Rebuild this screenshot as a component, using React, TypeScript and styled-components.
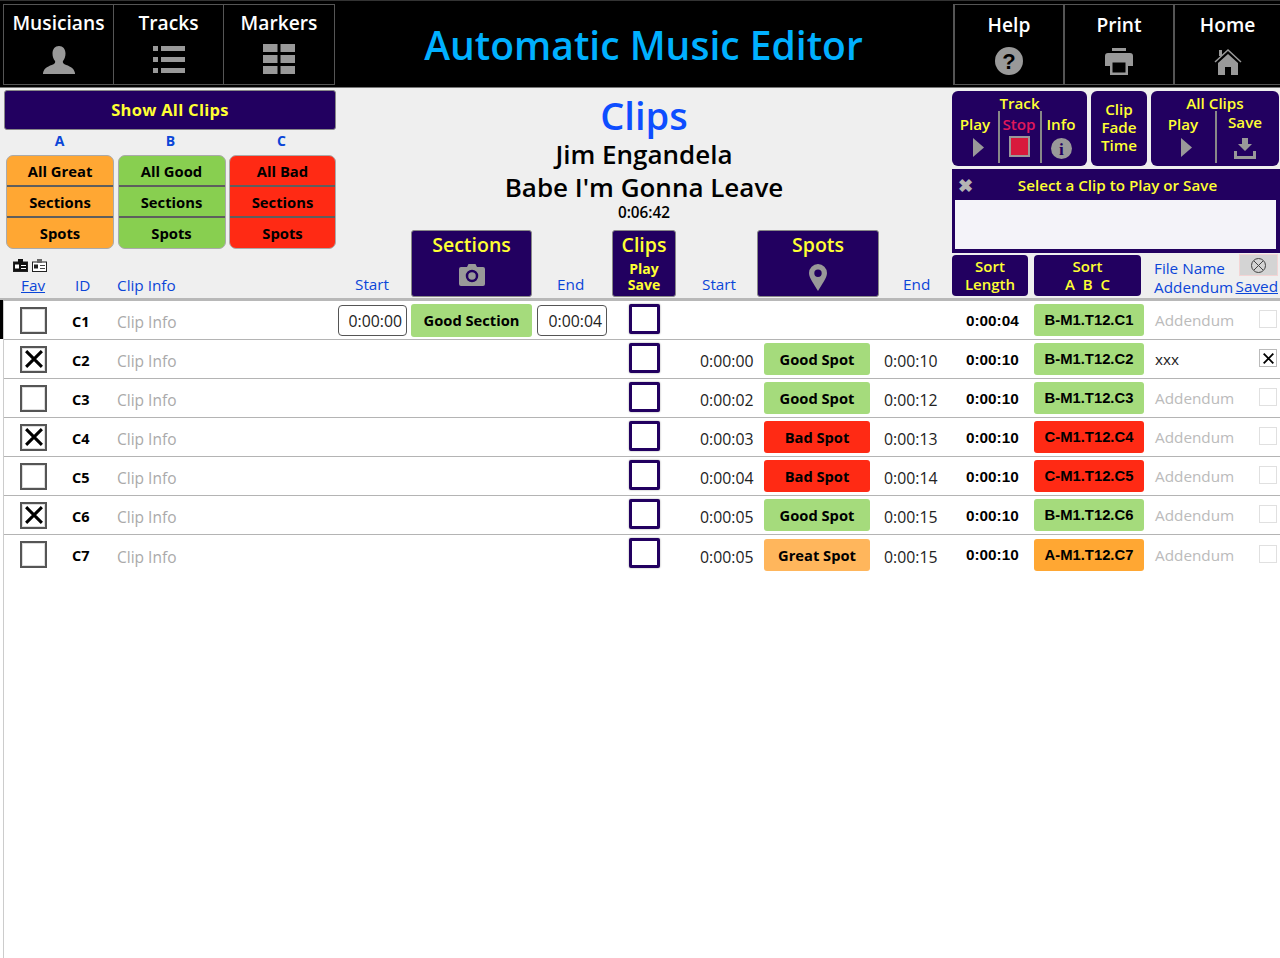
import React from 'react';
import styled, {createGlobalStyle} from "styled-components";

const NAVY = "#220060";
const YELLOW = "#ffff33";
const ICON = "#999999";
const LINK = "#0b46d8";
const ORANGE = "#ffa733";
const GREEN = "#88cf50";
const RED = "#ff2a14";
const SOFT_GREEN = "#a5db7c";
const SANS = `"Open Sans", "Noto Sans", sans-serif`;

const GlobalStyle = createGlobalStyle`
    html, body {
        margin: 0;
        padding: 0;
        background: #ffffff;
        font-family: ${SANS};
    }
    * {
        box-sizing: border-box;
    }
`

type Clip = {
    id: string
    fav: boolean
    start?: string
    label?: string
    end?: string
    kind?: "good" | "bad" | "great"
    length: string
    file: string
    addendum?: string
}

const clips: Clip[] = [
    {id: "C1", fav: false, length: "0:00:04", file: "B-M1.T12.C1"},
    {id: "C2", fav: true, start: "0:00:00", label: "Good Spot", end: "0:00:10", kind: "good", length: "0:00:10", file: "B-M1.T12.C2", addendum: "xxx"},
    {id: "C3", fav: false, start: "0:00:02", label: "Good Spot", end: "0:00:12", kind: "good", length: "0:00:10", file: "B-M1.T12.C3"},
    {id: "C4", fav: true, start: "0:00:03", label: "Bad Spot", end: "0:00:13", kind: "bad", length: "0:00:10", file: "C-M1.T12.C4"},
    {id: "C5", fav: false, start: "0:00:04", label: "Bad Spot", end: "0:00:14", kind: "bad", length: "0:00:10", file: "C-M1.T12.C5"},
    {id: "C6", fav: true, start: "0:00:05", label: "Good Spot", end: "0:00:15", kind: "good", length: "0:00:10", file: "B-M1.T12.C6"},
    {id: "C7", fav: false, start: "0:00:05", label: "Great Spot", end: "0:00:15", kind: "great", length: "0:00:10", file: "A-M1.T12.C7"},
];

const kindColor = {good: SOFT_GREEN, bad: RED, great: "#ffb65c"};
const fileColor = {good: SOFT_GREEN, bad: RED, great: ORANGE};

const PersonIcon = () => (
    <svg width="32" height="28" viewBox="0 0 32 28"><path fill={ICON} d="M16 0c4 0 6.500 3 6.500 7.500 0 3-1 5.500-2.500 7.500-.5 1 0 2.500 1.500 3.200C26 20 31 21.500 32 27v1H0v-1c1-5.500 6-7 10.500-8.800C12 17.500 12.500 16 12 15c-1.500-2-2.500-4.500-2.500-7.500C9.500 3 12 0 16 0z"/></svg>
);
const ListIcon = () => (
    <svg width="32" height="28" viewBox="0 0 32 28" fill={ICON}>
        <rect x="0" y="0" width="5" height="5"/><rect x="8" y="0" width="24" height="5"/>
        <rect x="0" y="11" width="5" height="5"/><rect x="8" y="11" width="24" height="5"/>
        <rect x="0" y="22" width="5" height="5"/><rect x="8" y="22" width="24" height="5"/>
    </svg>
);
const GridIcon = () => (
    <svg width="32" height="30" viewBox="0 0 32 30" fill={ICON}>
        <rect x="0" y="0" width="14.500" height="8"/><rect x="17.500" y="0" width="14.500" height="8"/>
        <rect x="0" y="11" width="14.500" height="8"/><rect x="17.500" y="11" width="14.500" height="8"/>
        <rect x="0" y="22" width="14.500" height="8"/><rect x="17.500" y="22" width="14.500" height="8"/>
    </svg>
);
const HelpIcon = () => (
    <svg width="28" height="28" viewBox="0 0 28 28">
        <circle cx="14" cy="14" r="14" fill={ICON}/>
        <text x="14" y="22" textAnchor="middle" fontFamily="Liberation Sans" fontWeight="700" fontSize="22" fill="#000">?</text>
    </svg>
);
const PrintIcon = () => (
    <svg width="28" height="27" viewBox="0 0 28 27" fill={ICON}>
        <rect x="7" y="0" width="14" height="3"/>
        <path d="M3 5h22a3 3 0 0 1 3 3v10h-5v-6H5v6H0V8a3 3 0 0 1 3-3z"/>
        <path d="M5 12h18v15H5zM7.500 14.500v10h13v-10z" fillRule="evenodd"/>
    </svg>
);
const HomeIcon = () => (
    <svg width="28" height="27" viewBox="0 0 28 27">
        <path fill="none" stroke={ICON} strokeWidth="1.500" d="M1 14 14 2l13 12"/>
        <rect x="5" y="2" width="3" height="6" fill={ICON}/>
        <path fill={ICON} d="M14 6 24 15v12h-7v-8h-6v8H4V15z"/>
    </svg>
);
const Triangle = () => (
    <TriangleShape width="11" height="19" viewBox="0 0 11 19"><path fill={ICON} d="M0 0l11 9.500L0 19z"/></TriangleShape>
);
const InfoIcon = () => (
    <svg width="21" height="21" viewBox="0 0 22 22">
        <circle cx="11" cy="11" r="11" fill={ICON}/>
        <text x="11" y="18" textAnchor="middle" fontFamily="Liberation Serif" fontWeight="700" fontSize="18" fill={NAVY}>i</text>
    </svg>
);
const SaveIcon = () => (
    <svg width="22" height="21" viewBox="0 0 22 21" fill={ICON}>
        <path d="M8 0h6v6h4l-7 7-7-7h4z"/>
        <path d="M0 13h3v5h16v-5h3v8H0z"/>
    </svg>
);
const CameraIcon = () => (
    <svg width="26" height="22" viewBox="0 0 26 22">
        <path fill={ICON} d="M2 3h6l1.500-3h7L18 3h6a2 2 0 0 1 2 2v15a2 2 0 0 1-2 2H2a2 2 0 0 1-2-2V5a2 2 0 0 1 2-2z"/>
        <circle cx="13" cy="12" r="5" fill="none" stroke={NAVY} strokeWidth="2.500"/>
    </svg>
);
const PinIcon = () => (
    <svg width="18" height="27" viewBox="0 0 18 27">
        <path fill={ICON} fillRule="evenodd" d="M9 0a9 9 0 0 1 9 9c0 5-5 11-9 18C5 20 0 14 0 9a9 9 0 0 1 9-9zm0 5.500a3.700 3.700 0 1 0 0 7.400 3.700 3.700 0 0 0 0-7.400z"/>
    </svg>
);
const CrossMark = ({size}: {size: number}) => (
    <svg width={size} height={size} viewBox="0 0 16 16"><path stroke="#000" strokeWidth="2.700" d="M1 1l14 14M15 1 1 15"/></svg>
);
const CardIcon = ({dark}: {dark: boolean}) => (
    <svg width="15" height="13" viewBox="0 0 15 13">
        <rect x="0.500" y="3" width="14" height="9.500" fill={dark ? "#111" : "#fff"} stroke="#222"/>
        <rect x="5" y="0" width="5" height="4" fill={dark ? "#111" : "#666"}/>
        <rect x="2" y="5.500" width="4" height="4" fill={dark ? "#fff" : "#222"}/>
        <rect x="8" y="6" width="5" height="1" fill={dark ? "#fff" : "#444"}/>
        <rect x="8" y="9" width="5" height="1" fill={dark ? "#fff" : "#444"}/>
    </svg>
);

const App = () => {
    return (
        <>
            <GlobalStyle/>
            <Header>
                <NavGroup>
                    <NavCell $width={111}><NavLabel>Musicians</NavLabel><NavIcon><PersonIcon/></NavIcon></NavCell>
                    <NavCell $width={111}><NavLabel>Tracks</NavLabel><NavIcon><ListIcon/></NavIcon></NavCell>
                    <NavCell $width={112}><NavLabel>Markers</NavLabel><NavIcon><GridIcon/></NavIcon></NavCell>
                </NavGroup>
                <AppTitle>Automatic Music Editor</AppTitle>
                <NavGroup>
                    <NavCell $width={111} $low><NavLabel>Help</NavLabel><NavIcon $low><HelpIcon/></NavIcon></NavCell>
                    <NavCell $width={111} $low><NavLabel>Print</NavLabel><NavIcon $low><PrintIcon/></NavIcon></NavCell>
                    <NavCell $width={108} $low><NavLabel>Home</NavLabel><NavIcon $low><HomeIcon/></NavIcon></NavCell>
                </NavGroup>
            </Header>

            <Main>
                <Panel>
                    <LeftColumn>
                        <ShowAll>Show All Clips</ShowAll>
                        <GroupLetters><span>A</span><span>B</span><span>C</span></GroupLetters>
                        <GroupCards>
                            <GroupCard $color={ORANGE}><GroupItem>All Great</GroupItem><GroupItem>Sections</GroupItem><GroupItem>Spots</GroupItem></GroupCard>
                            <GroupCard $color={GREEN}><GroupItem>All Good</GroupItem><GroupItem>Sections</GroupItem><GroupItem>Spots</GroupItem></GroupCard>
                            <GroupCard $color={RED}><GroupItem>All Bad</GroupItem><GroupItem>Sections</GroupItem><GroupItem>Spots</GroupItem></GroupCard>
                        </GroupCards>
                        <CardIcons><CardIcon dark/><CardIcon dark={false}/></CardIcons>
                        <ColumnHeads>
                            <FavLink>Fav</FavLink>
                            <HeadLabel>ID</HeadLabel>
                            <HeadLabel>Clip Info</HeadLabel>
                        </ColumnHeads>
                    </LeftColumn>

                    <CenterColumn>
                        <ClipsTitle>Clips</ClipsTitle>
                        <SongLine>Jim Engandela</SongLine>
                        <SongLine>Babe I'm Gonna Leave</SongLine>
                        <Duration>0:06:42</Duration>
                        <ToolRow>
                            <ToolLabel $left={19}>Start</ToolLabel>
                            <ToolButton><ToolTitle>Sections</ToolTitle><CameraIcon/></ToolButton>
                            <ToolLabel $left={25}>End</ToolLabel>
                            <ToolButton>
                                <ToolTitle>Clips</ToolTitle>
                                <ToolSmall>Play<br/>Save</ToolSmall>
                            </ToolButton>
                            <ToolLabel $left={26}>Start</ToolLabel>
                            <ToolButton><ToolTitle>Spots</ToolTitle><PinIcon/></ToolButton>
                            <ToolLabel $left={24}>End</ToolLabel>
                        </ToolRow>
                    </CenterColumn>

                    <RightColumn>
                        <TransportRow>
                            <TransportBox $width={135}>
                                <TransportTitle>Track</TransportTitle>
                                <TransportCells $columns="46px 42px 42px">
                                    <TransportCell><span>Play</span><Triangle/></TransportCell>
                                    <TransportCell $divided $stop><span>Stop</span><StopSquare/></TransportCell>
                                    <TransportCell $divided><span>Info</span><InfoIcon/></TransportCell>
                                </TransportCells>
                            </TransportBox>
                            <FadeBox>Clip<br/>Fade<br/>Time</FadeBox>
                            <TransportBox $width={128}>
                                <TransportTitle>All Clips</TransportTitle>
                                <TransportCells $columns="64px 60px">
                                    <TransportCell><span>Play</span><Triangle/></TransportCell>
                                    <TransportCell $divided><SaveLabel>Save</SaveLabel><SaveIcon/></TransportCell>
                                </TransportCells>
                            </TransportBox>
                        </TransportRow>
                        <SelectBox>
                            <SelectHead><CloseMark>✖</CloseMark>Select a Clip to Play or Save</SelectHead>
                            <SelectField/>
                        </SelectBox>
                        <SortRow>
                            <SortButton $width={76}>Sort<br/>Length</SortButton>
                            <SortButton $width={107}>Sort<br/>A&nbsp;&nbsp;B&nbsp;&nbsp;C</SortButton>
                            <FileHeads>
                                <HeadLabel>File Name</HeadLabel>
                                <HeadLabel>Addendum</HeadLabel>
                            </FileHeads>
                            <SavedColumn>
                                <ClearButton>
                                    <svg width="15" height="15" viewBox="0 0 15 15" fill="none" stroke="#444"><circle cx="7.500" cy="7.500" r="7"/><path d="M3 3l9 9M12 3l-9 9"/></svg>
                                </ClearButton>
                                <SavedLink>Saved</SavedLink>
                            </SavedColumn>
                        </SortRow>
                    </RightColumn>
                </Panel>

                {clips.map((clip, i) => (
                    <Row key={clip.id}>
                        {i === 0 && <RowMarker/>}
                        <FavCell><FavBox>{clip.fav && <CrossMark size={18}/>}</FavBox></FavCell>
                        <IdCell>{clip.id}</IdCell>
                        <InfoCell>Clip Info</InfoCell>
                        {i === 0 ? <TimeBox $width={69}>0:00:00</TimeBox> : <span/>}
                        {i === 0 ? <SectionTag>Good Section</SectionTag> : <span/>}
                        {i === 0 ? <TimeBox $width={70}>0:00:04</TimeBox> : <span/>}
                        <PlayBox/>
                        <SpotTime>{clip.start}</SpotTime>
                        {clip.kind ? <SpotTag $color={kindColor[clip.kind]}>{clip.label}</SpotTag> : <span/>}
                        <SpotTime>{clip.end}</SpotTime>
                        <LengthCell>{clip.length}</LengthCell>
                        <FileTag $color={fileColor[clip.kind ?? "good"]}>{clip.file}</FileTag>
                        <AddendumCell $filled={!!clip.addendum}>{clip.addendum ?? "Addendum"}</AddendumCell>
                        <SavedBox $on={!!clip.addendum}>{clip.addendum && <CrossMark size={11}/>}</SavedBox>
                    </Row>
                ))}
            </Main>
        </>
    );
};

export default App;

const Header = styled.header`
    height: 88px;
    background: #000000;
    border-top: 1px solid #333;
    border-bottom: 1px solid #777;
    padding: 3px 0 2px 3px;
    display: flex;
    justify-content: space-between;
`

const NavGroup = styled.nav`
    display: flex;
`

const NavCell = styled.div<{$width: number; $low?: boolean}>`
    width: ${p => p.$width}px;
    height: 81px;
    border: 1px solid #555;
    border-left-width: ${p => p.$low ? 2 : 1}px;
    margin-right: -1px;
    display: flex;
    flex-direction: column;
    align-items: center;
    padding-top: ${p => p.$low ? 6 : 4}px;
`

const NavLabel = styled.div`
    color: #ffffff;
    font-weight: 600;
    font-size: 19.200px;
    line-height: 27px;
`

const NavIcon = styled.div<{$low?: boolean}>`
    height: 30px;
    margin-top: ${p => p.$low ? 7 : 8}px;
    display: flex;
    align-items: flex-end;
`

const AppTitle = styled.h1`
    margin: 0;
    flex: 1;
    text-align: center;
    color: #00b0ff;
    font-weight: 600;
    font-size: 39px;
    line-height: 81px;
    white-space: nowrap;
`

const Main = styled.main`
    margin-left: 3px;
    border-left: 1px solid #cccccc;
    min-height: 870px;
`

const Panel = styled.section`
    height: 213px;
    margin-left: -4px;
    padding-left: 4px;
    background: #efefef;
    border-bottom: 3px solid #b8b8b8;
    display: flex;
`

const LeftColumn = styled.div`
    width: 332px;
    padding-top: 2px;
`

const ShowAll = styled.div`
    height: 40px;
    background: ${NAVY};
    border: 1px solid #888;
    border-radius: 3px;
    color: ${YELLOW};
    font-weight: 700;
    font-size: 16.500px;
    letter-spacing: 0.3px;
    line-height: 37px;
    text-align: center;
`

const GroupLetters = styled.div`
    height: 25px;
    padding-left: 2px;
    display: grid;
    grid-template-columns: 107px 105px 107px;
    column-gap: 5px;
    color: ${LINK};
    font-weight: 700;
    font-size: 14px;
    line-height: 22px;
    text-align: center;
`

const GroupCards = styled.div`
    margin-left: 2px;
    display: grid;
    grid-template-columns: 108px 108px 107px;
    column-gap: 3.500px;
`

const GroupCard = styled.div<{$color: string}>`
    height: 94px;
    background: ${p => p.$color};
    border: 1px solid #aaa;
    border-radius: 7px;
    overflow: hidden;
`

const GroupItem = styled.div`
    height: 31px;
    color: #000;
    font-weight: 700;
    font-size: 14.800px;
    line-height: 30px;
    text-align: center;
    border-bottom: 2px solid #5e5e5e;
    &:last-child {
        border-bottom: 0;
    }
`

const CardIcons = styled.div`
    height: 23px;
    padding: 10px 0 0 9px;
    display: flex;
    gap: 4px;
`

const ColumnHeads = styled.div`
    margin-top: 4px;
    display: grid;
    grid-template-columns: 54px 42px auto;
    padding-left: 17px;
`

const HeadLabel = styled.div`
    color: ${LINK};
    font-size: 15.300px;
    line-height: 19px;
    white-space: nowrap;
`

const FavLink = styled(HeadLabel)`
    text-decoration: underline;
`

const CenterColumn = styled.div`
    width: 616px;
    padding-top: 5px;
    display: flex;
    flex-direction: column;
    align-items: center;
`

const ClipsTitle = styled.div`
    color: #0d4dff;
    font-weight: 600;
    font-size: 38px;
    line-height: 45px;
`

const SongLine = styled.div`
    color: #000;
    font-weight: 600;
    font-size: 26px;
    line-height: 33px;
`

const Duration = styled.div`
    color: #000;
    font-weight: 600;
    font-size: 15.300px;
    line-height: 16px;
`

const ToolRow = styled.div`
    width: 100%;
    height: 67px;
    margin-top: 10px;
    display: grid;
    grid-template-columns: 75px 121px 80px 64px 81px 122px 73px;
    align-items: end;
`

const ToolLabel = styled(HeadLabel)<{$left: number}>`
    padding-bottom: 1px;
    padding-left: ${p => p.$left}px;
    margin-bottom: 2px;
`

const ToolButton = styled.div`
    height: 67px;
    background: ${NAVY};
    border: 1px solid #888;
    border-radius: 3px;
    display: flex;
    flex-direction: column;
    align-items: center;
    gap: 6px;
`

const ToolTitle = styled.div`
    color: ${YELLOW};
    font-weight: 600;
    font-size: 19.500px;
    line-height: 27px;
`

const ToolSmall = styled.div`
    color: ${YELLOW};
    font-weight: 700;
    font-size: 14px;
    line-height: 16px;
    text-align: center;
    margin-top: -3px;
`

const RightColumn = styled.div`
    width: 328px;
    padding-top: 3px;
`

const TransportRow = styled.div`
    display: flex;
    gap: 4px;
`

const TransportBox = styled.div<{$width: number}>`
    width: ${p => p.$width}px;
    height: 75px;
    background: ${NAVY};
    border-radius: 6px;
    color: ${YELLOW};
    font-weight: 600;
    font-size: 15.200px;
    text-align: center;
    padding-top: 4px;
`

const TransportTitle = styled.div`
    line-height: 16px;
`

const TransportCells = styled.div<{$columns: string}>`
    display: grid;
    grid-template-columns: ${p => p.$columns};
    height: 52px;
`

const TransportCell = styled.div<{$divided?: boolean; $stop?: boolean}>`
    display: flex;
    flex-direction: column;
    align-items: center;
    padding-top: 3px;
    gap: 4px;
    line-height: 20px;
    box-shadow: ${p => p.$divided ? "inset 2px 0 0 #888" : "none"};
    color: ${p => p.$stop ? "#e0185a" : YELLOW};
`

const TriangleShape = styled.svg`
    flex: none;
    margin-left: 6px;
`

const SaveLabel = styled.span`
    margin: -2px 0 2px;
`

const StopSquare = styled.div`
    width: 21px;
    height: 21px;
    margin-top: -2px;
    background: #d81a3c;
    border: 2px solid #999;
`

const FadeBox = styled.div`
    width: 56px;
    height: 75px;
    background: ${NAVY};
    border-radius: 6px;
    color: ${YELLOW};
    font-weight: 600;
    font-size: 15.200px;
    line-height: 18px;
    text-align: center;
    padding-top: 9px;
`

const SelectBox = styled.div`
    height: 84px;
    margin-top: 3px;
    background: ${NAVY};
    padding: 0 4px 4px 3px;
    display: flex;
    flex-direction: column;
`

const SelectHead = styled.div`
    height: 31px;
    position: relative;
    padding-left: 4px;
    color: ${YELLOW};
    font-weight: 600;
    font-size: 15.200px;
    line-height: 33px;
    text-align: center;
`

const CloseMark = styled.span`
    position: absolute;
    left: 3px;
    top: 0;
    color: #b4b4b4;
    font-size: 18px;
`

const SelectField = styled.div`
    flex: 1;
    background: #f4f3f9;
`

const SortRow = styled.div`
    margin-top: 2px;
    display: flex;
`

const SortButton = styled.div<{$width: number}>`
    width: ${p => p.$width}px;
    height: 41px;
    margin-right: 6px;
    background: ${NAVY};
    border-radius: 4px;
    color: ${YELLOW};
    font-weight: 600;
    font-size: 15px;
    line-height: 18px;
    text-align: center;
    padding-top: 2px;
`

const FileHeads = styled.div`
    margin-left: 7px;
    padding-top: 4px;
    width: 85px;
    flex: none;
`

const SavedColumn = styled.div`
    margin-left: -2px;
    width: 41px;
    flex: none;
    display: flex;
    flex-direction: column;
    align-items: flex-end;
    margin-top: -1px;
`

const ClearButton = styled.div`
    width: 39px;
    height: 22px;
    background: #d4d4d4;
    border: 1px solid #f3d4d4;
    display: flex;
    align-items: center;
    justify-content: center;
`

const SavedLink = styled(HeadLabel)`
    text-decoration: underline;
    margin-top: 1px;
`

const Row = styled.div`
    position: relative;
    height: 39px;
    border-bottom: 1px solid #b4b4b4;
    display: grid;
    grid-template-columns: 60px 53px 221px 69px 125px 75px 53px 94px 116px 68px 83px 123px 115px 18px;
    align-items: center;
    &:last-child {
        border-bottom: 0;
    }
`

const RowMarker = styled.div`
    position: absolute;
    left: -4px;
    top: -1px;
    bottom: 0;
    width: 3px;
    background: #000;
`

const FavCell = styled.div`
    padding-left: 16px;
`

const FavBox = styled.div`
    width: 27px;
    height: 27px;
    border: 2px solid #555;
    box-shadow: inset 0 0 0 1px #ddd;
    background: #fff;
    display: flex;
    align-items: center;
    justify-content: center;
`

const IdCell = styled.div`
    padding: 2px 0 0 8px;
    font-weight: 700;
    font-size: 14.500px;
`

const InfoCell = styled.div`
    padding-top: 4px;
    color: #aaaaaa;
    font-size: 15.500px;
`

const TimeBox = styled.div<{$width: number}>`
    width: ${p => p.$width}px;
    height: 31px;
    justify-self: end;
    background: #fff;
    border: 1px solid #555;
    border-radius: 4px;
    font-size: 15.800px;
    line-height: 31px;
    text-align: right;
    padding-right: 4px;
    color: #222;
`

const SectionTag = styled.div`
    width: 121px;
    height: 33px;
    justify-self: end;
    background: ${SOFT_GREEN};
    border-radius: 3px;
    font-weight: 700;
    font-size: 14.700px;
    line-height: 32px;
    text-align: center;
    color: #000;
`

const PlayBox = styled.div`
    width: 31px;
    height: 30px;
    justify-self: end;
    margin-top: -3px;
    background: #fff;
    border: 3px solid ${NAVY};
    border-radius: 2px;
    box-shadow: 0 0 2px #999;
`

const SpotTime = styled.div`
    width: 54px;
    justify-self: end;
    padding-top: 4px;
    font-size: 15.800px;
    color: #222;
    white-space: nowrap;
`

const SpotTag = styled.div<{$color: string}>`
    width: 106px;
    height: 32px;
    justify-self: end;
    background: ${p => p.$color};
    border-radius: 3px;
    font-weight: 700;
    font-size: 14.700px;
    line-height: 33px;
    text-align: center;
    color: #000;
`

const LengthCell = styled.div`
    width: 55px;
    justify-self: end;
    padding-top: 1px;
    font-family: "Liberation Sans", sans-serif;
    font-weight: 700;
    font-size: 15.300px;
    color: #000;
    white-space: nowrap;
`

const FileTag = styled.div<{$color: string}>`
    width: 110px;
    height: 32px;
    justify-self: end;
    background: ${p => p.$color};
    border-radius: 3px;
    font-family: "Liberation Sans", sans-serif;
    font-weight: 700;
    font-size: 14.800px;
    line-height: 33px;
    text-align: center;
    color: #000;
    white-space: nowrap;
`

const AddendumCell = styled.div<{$filled: boolean}>`
    width: 104px;
    justify-self: end;
    font-size: 15.300px;
    color: ${p => p.$filled ? "#222" : "#bbbbbb"};
`

const SavedBox = styled.div<{$on: boolean}>`
    width: 18px;
    height: 18px;
    margin-top: -2px;
    background: #fff;
    border: 1px solid ${p => p.$on ? "#bbb" : "#e0e0e0"};
    display: flex;
    align-items: center;
    justify-content: center;
`
